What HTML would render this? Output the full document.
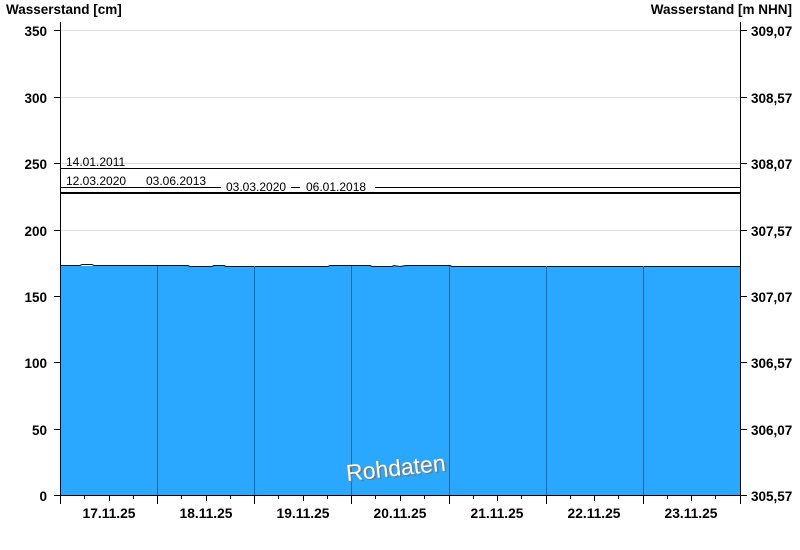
<!DOCTYPE html>
<html><head><meta charset="utf-8"><style>
body{margin:0;background:#fff;}
svg{display:block;font-family:"Liberation Sans",Arial,sans-serif;}
.b{font-weight:bold;font-size:13.5px;fill:#000;}
.d{font-weight:bold;font-size:13.8px;fill:#000;}
.s{font-size:12px;fill:#000;}
</style></head><body>
<svg width="800" height="550" viewBox="0 0 800 550">
<rect width="800" height="550" fill="#fff"/>
<g stroke="#dcdcdc" stroke-width="1">
<line x1="61" y1="30.5" x2="740" y2="30.5"/>
<line x1="61" y1="97.5" x2="740" y2="97.5"/>
<line x1="61" y1="163.5" x2="740" y2="163.5"/>
<line x1="61" y1="230.5" x2="740" y2="230.5"/>
</g>
<rect x="61" y="266" width="679" height="229" fill="#2aa8ff"/>
<polyline fill="none" stroke="#111" stroke-width="1" points="61,265.5 80,265.5 82,264.5 92,264.5 94,265.5 188,265.5 190,266.5 212,266.5 214,265.5 224,265.5 226,266.5 328,266.5 330,265.5 370,265.5 372,266.5 392,266.5 394,265.5 400,266.5 406,265.5 450,265.5 452,266.5 740,266.5"/>
<g stroke="#1f6aa0" stroke-width="1">
<line x1="157.5" y1="266" x2="157.5" y2="495"/>
<line x1="254.5" y1="266" x2="254.5" y2="495"/>
<line x1="351.5" y1="266" x2="351.5" y2="495"/>
<line x1="449.5" y1="266" x2="449.5" y2="495"/>
<line x1="546.5" y1="266" x2="546.5" y2="495"/>
<line x1="643.5" y1="266" x2="643.5" y2="495"/>
</g>
<line x1="61" y1="168.5" x2="740" y2="168.5" stroke="#000"/>
<line x1="61" y1="187.5" x2="740" y2="187.5" stroke="#000"/>
<line x1="61" y1="193" x2="740" y2="193" stroke="#000" stroke-width="2"/>
<rect x="221" y="180" width="70" height="12" fill="#fff"/>
<rect x="300" y="180" width="75" height="12" fill="#fff"/>
<text class="s" x="66" y="166">14.01.2011</text>
<text class="s" x="66" y="185">12.03.2020</text>
<text class="s" x="146" y="185">03.06.2013</text>
<text class="s" x="226" y="191">03.03.2020</text>
<text class="s" x="306" y="191">06.01.2018</text>
<g stroke="#000" stroke-width="1">
<line x1="60.5" y1="22" x2="60.5" y2="495"/>
<line x1="740.5" y1="22" x2="740.5" y2="495"/>
<line x1="60" y1="495.5" x2="741" y2="495.5"/>
<line x1="54" y1="30.5" x2="60" y2="30.5"/><line x1="54" y1="97.5" x2="60" y2="97.5"/>
<line x1="54" y1="163.5" x2="60" y2="163.5"/><line x1="54" y1="230.5" x2="60" y2="230.5"/>
<line x1="54" y1="296.5" x2="60" y2="296.5"/><line x1="54" y1="362.5" x2="60" y2="362.5"/>
<line x1="54" y1="429.5" x2="60" y2="429.5"/><line x1="54" y1="495.5" x2="60" y2="495.5"/>
<line x1="741" y1="30.5" x2="747" y2="30.5"/><line x1="741" y1="97.5" x2="747" y2="97.5"/>
<line x1="741" y1="163.5" x2="747" y2="163.5"/><line x1="741" y1="230.5" x2="747" y2="230.5"/>
<line x1="741" y1="296.5" x2="747" y2="296.5"/><line x1="741" y1="362.5" x2="747" y2="362.5"/>
<line x1="741" y1="429.5" x2="747" y2="429.5"/><line x1="741" y1="495.5" x2="747" y2="495.5"/>
</g>
<g stroke="#000" stroke-width="1">
<line x1="60.5" y1="495" x2="60.5" y2="504"/><line x1="84.5" y1="495" x2="84.5" y2="499"/><line x1="109.5" y1="495" x2="109.5" y2="501"/><line x1="133.5" y1="495" x2="133.5" y2="499"/>
<line x1="157.5" y1="495" x2="157.5" y2="504"/><line x1="181.5" y1="495" x2="181.5" y2="499"/><line x1="206.5" y1="495" x2="206.5" y2="501"/><line x1="230.5" y1="495" x2="230.5" y2="499"/>
<line x1="254.5" y1="495" x2="254.5" y2="504"/><line x1="278.5" y1="495" x2="278.5" y2="499"/><line x1="303.5" y1="495" x2="303.5" y2="501"/><line x1="327.5" y1="495" x2="327.5" y2="499"/>
<line x1="351.5" y1="495" x2="351.5" y2="504"/><line x1="375.5" y1="495" x2="375.5" y2="499"/><line x1="400.5" y1="495" x2="400.5" y2="501"/><line x1="424.5" y1="495" x2="424.5" y2="499"/>
<line x1="449.5" y1="495" x2="449.5" y2="504"/><line x1="473.5" y1="495" x2="473.5" y2="499"/><line x1="497.5" y1="495" x2="497.5" y2="501"/><line x1="521.5" y1="495" x2="521.5" y2="499"/>
<line x1="546.5" y1="495" x2="546.5" y2="504"/><line x1="570.5" y1="495" x2="570.5" y2="499"/><line x1="594.5" y1="495" x2="594.5" y2="501"/><line x1="618.5" y1="495" x2="618.5" y2="499"/>
<line x1="643.5" y1="495" x2="643.5" y2="504"/><line x1="667.5" y1="495" x2="667.5" y2="499"/><line x1="691.5" y1="495" x2="691.5" y2="501"/><line x1="715.5" y1="495" x2="715.5" y2="499"/>
<line x1="740.5" y1="495" x2="740.5" y2="504"/>
</g>
<g class="b" text-anchor="end">
<text x="47" y="36">350</text><text x="47" y="103">300</text><text x="47" y="169">250</text>
<text x="47" y="236">200</text><text x="47" y="302">150</text><text x="47" y="368">100</text>
<text x="47" y="435">50</text><text x="47" y="501">0</text>
</g>
<g class="b">
<text x="751" y="36">309,07</text><text x="751" y="103">308,57</text><text x="751" y="169">308,07</text>
<text x="751" y="236">307,57</text><text x="751" y="302">307,07</text><text x="751" y="368">306,57</text>
<text x="751" y="435">306,07</text><text x="751" y="501">305,57</text>
</g>
<g class="d" text-anchor="middle">
<text x="109" y="518">17.11.25</text><text x="206" y="518">18.11.25</text><text x="303" y="518">19.11.25</text>
<text x="400" y="518">20.11.25</text><text x="497" y="518">21.11.25</text><text x="594" y="518">22.11.25</text>
<text x="691" y="518">23.11.25</text>
</g>
<text class="b" x="6" y="14">Wasserstand [cm]</text>
<text class="b" x="792" y="14" text-anchor="end">Wasserstand [m NHN]</text>
<g transform="translate(347,481) rotate(-6)" font-size="23">
<text x="1.5" y="1.5" fill="#777">Rohdaten</text>
<text x="0" y="0" fill="#fff">Rohdaten</text>
</g>
</svg>
</body></html>
